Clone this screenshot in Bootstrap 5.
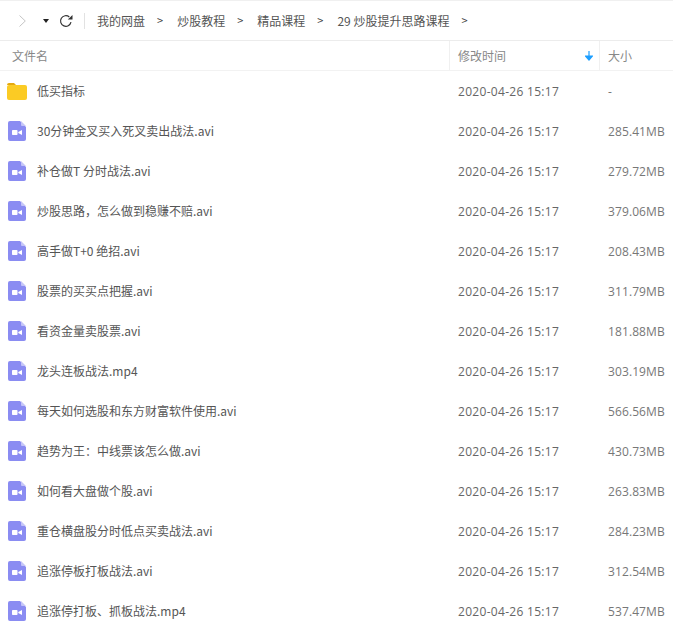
<!DOCTYPE html>
<html lang="zh-CN">
<head>
    <meta charset="UTF-8">
    <meta name="viewport" content="width=device-width, initial-scale=1.0">
    <title>炒股提升思路课程</title>
    <link href="https://cdn.jsdelivr.net/npm/bootstrap@5.3.3/dist/css/bootstrap.min.css" rel="stylesheet">
    <style>
        html, body { height: 626px; overflow: hidden; }
        body {
            font-family: "Noto Sans CJK SC", "Noto Sans", sans-serif;
            font-size: 12px;
            color: #666;
            background: #fff;
        }
        .top-line { height: 1px; background: #f0f0f0; }
        .tool-bar { height: 40px; border-bottom: 1px solid #ececec; }
        .nav-forward { margin-left: 19px; width: 7px; }
        .nav-drop { margin-left: 17px; width: 6px; }
        .nav-reload { margin-left: 10px; width: 14px; }
        .nav-sep { width: 1px; height: 16px; background: #e2e2e2; margin: 0 12px 0 11px; }
        .crumb-part { color: #555; white-space: nowrap; }
        .crumb-arrow { color: #444; margin: 0 14px 0 12px; font-size: 11px; }
        .head-row { height: 30px; border-bottom: 1px solid #f2f2f2; color: #888; }
        .col-name { width: 449px; flex: none; }
        .col-time { width: 150px; flex: none; }
        .col-size { flex: 1; }
        .head-row .col-name { padding-left: 12px; }
        .head-row .col-time { border-left: 1px solid #f0f0f0; padding: 0 6px 0 8px; height: 100%; }
        .head-row .col-size { border-left: 1px solid #f0f0f0; padding-left: 8px; height: 100%; }
        .file-row { height: 40px; }
        .file-row .col-name { padding-left: 7px; gap: 10px; color: #555; }
        .file-row .col-time { padding: 1px 0 0 9px; color: #666; font-family: "Open Sans", sans-serif; letter-spacing: .3px; }
        .file-row .col-size { padding: 1px 0 0 9px; color: #777; font-family: "Open Sans", sans-serif; letter-spacing: .1px; }
        .file-icon { width: 20px; flex: none; display: block; }
    </style>
</head>
<body>

<div class="top-line"></div>

<div class="tool-bar d-flex align-items-center">
    <svg class="nav-forward" height="12" viewBox="0 0 7 12"><path d="M.5.500 6.300 6 .5 11.500" fill="none" stroke="#c4c4c4" stroke-width="1"/></svg>
    <svg class="nav-drop" height="4" viewBox="0 0 6 4"><path d="M0 0h6L3 4z" fill="#222"/></svg>
    <svg class="nav-reload" height="14" viewBox="0 0 14 14"><path d="M12 8.200A5.300 5.300 0 1 1 10.300 3" fill="none" stroke="#333" stroke-width="1.200"/><path d="M8.800 5.400h4.700V1z" fill="#333"/></svg>
    <div class="nav-sep"></div>
    <span class="crumb-part">我的网盘</span><span class="crumb-arrow">&gt;</span>
    <span class="crumb-part">炒股教程</span><span class="crumb-arrow">&gt;</span>
    <span class="crumb-part">精品课程</span><span class="crumb-arrow">&gt;</span>
    <span class="crumb-part">29 炒股提升思路课程</span><span class="crumb-arrow">&gt;</span>
</div>

<div class="head-row d-flex align-items-center">
    <div class="col-name">文件名</div>
    <div class="col-time d-flex align-items-center justify-content-between">
        <span>修改时间</span>
        <svg width="8" height="10" viewBox="0 0 8 10"><path d="M4 0v8M.5 5 4 9l3.500-4z" fill="#1e9fff" stroke="#1e9fff" stroke-width="1.200"/></svg>
    </div>
    <div class="col-size d-flex align-items-center">大小</div>
</div>

<div id="file-list"></div>

<script>
    const files = [
        ['30分钟金叉买入死叉卖出战法.avi', '285.41MB'],
        ['补仓做T 分时战法.avi', '279.72MB'],
        ['炒股思路，怎么做到稳赚不赔.avi', '379.06MB'],
        ['高手做T+0 绝招.avi', '208.43MB'],
        ['股票的买买点把握.avi', '311.79MB'],
        ['看资金量卖股票.avi', '181.88MB'],
        ['龙头连板战法.mp4', '303.19MB'],
        ['每天如何选股和东方财富软件使用.avi', '566.56MB'],
        ['趋势为王：中线票该怎么做.avi', '430.73MB'],
        ['如何看大盘做个股.avi', '263.83MB'],
        ['重仓横盘股分时低点买卖战法.avi', '284.23MB'],
        ['追涨停板打板战法.avi', '312.54MB'],
        ['追涨停打板、抓板战法.mp4', '537.47MB']
    ];

    const folderIcon = `<svg class="file-icon" height="17" viewBox="0 0 20 17">
        <path d="M0 2a2 2 0 0 1 2-2h5l2 2H0z" fill="#e5a90f"/>
        <rect y="2" width="20" height="15" rx="2" fill="#fbcb24"/></svg>`;

    const videoIcon = `<svg class="file-icon" height="20" viewBox="0 0 20 20">
        <path d="M3 0h10l6 6v12a2 2 0 0 1-2 2H3a2 2 0 0 1-2-2V2a2 2 0 0 1 2-2z" fill="#8a8cf2"/>
        <path d="M14 0l5 5h-4a1 1 0 0 1-1-1z" fill="#c4c5f8"/>
        <rect x="5" y="9" width="5.500" height="5" rx=".8" fill="#fff"/>
        <path d="M11.300 11 15 9v5l-3.700-2z" fill="#fff"/></svg>`;

    function row(icon, name, size) {
        return `<div class="file-row d-flex align-items-center">
            <div class="col-name d-flex align-items-center">${icon}<span>${name}</span></div>
            <div class="col-time">2020-04-26 15:17</div>
            <div class="col-size">${size}</div>
        </div>`;
    }

    document.getElementById('file-list').innerHTML =
        row(folderIcon, '低买指标', '-') + files.map(f => row(videoIcon, f[0], f[1])).join('');
</script>
<script src="https://cdn.jsdelivr.net/npm/bootstrap@5.3.3/dist/js/bootstrap.bundle.min.js"></script>
</body>
</html>
